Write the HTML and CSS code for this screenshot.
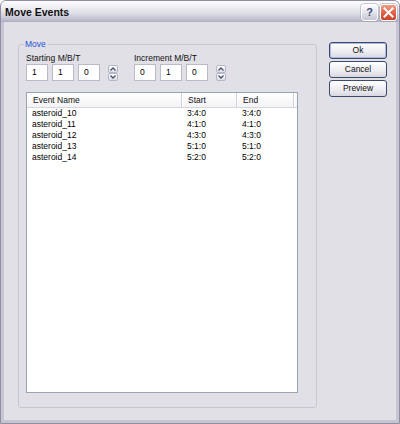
FILE: index.html
```html
<!DOCTYPE html>
<html>
<head>
<meta charset="utf-8">
<link rel="stylesheet" href="styles.css">
</head>
<body>
<div class="window">
  <div class="titlebar">
    <span class="title">Move Events</span>
    <div class="caption-buttons">
      <div class="cap-btn help">?</div>
      <div class="cap-btn close">
        <svg width="11" height="11" viewBox="0 0 11 11"><path d="M1.5 1.5 L9.5 9.5 M9.5 1.5 L1.5 9.5" stroke="#fff" stroke-width="2" stroke-linecap="square"/></svg>
      </div>
    </div>
  </div>
  <div class="client">
    <fieldset class="group">
      <legend>Move</legend>
      <div class="fields">
        <div class="field">
          <div class="label">Starting M/B/T</div>
          <div class="inputs">
            <div class="box">1</div>
            <div class="box">1</div>
            <div class="box">0</div>
            <div class="spin">
              <div class="half"><svg width="6" height="4" viewBox="0 0 6 4"><path d="M0.5 3.5 L3 1 L5.5 3.5" fill="none" stroke="#4b5068" stroke-width="1.3"/></svg></div>
              <div class="half"><svg width="6" height="4" viewBox="0 0 6 4"><path d="M0.5 0.5 L3 3 L5.5 0.5" fill="none" stroke="#4b5068" stroke-width="1.3"/></svg></div>
            </div>
          </div>
        </div>
        <div class="field">
          <div class="label">Increment M/B/T</div>
          <div class="inputs">
            <div class="box">0</div>
            <div class="box">1</div>
            <div class="box">0</div>
            <div class="spin">
              <div class="half"><svg width="6" height="4" viewBox="0 0 6 4"><path d="M0.5 3.5 L3 1 L5.5 3.5" fill="none" stroke="#4b5068" stroke-width="1.3"/></svg></div>
              <div class="half"><svg width="6" height="4" viewBox="0 0 6 4"><path d="M0.5 0.5 L3 3 L5.5 0.5" fill="none" stroke="#4b5068" stroke-width="1.3"/></svg></div>
            </div>
          </div>
        </div>
      </div>
      <div class="list">
        <div class="head">
          <div class="hcell">Event Name</div>
          <div class="hcell">Start</div>
          <div class="hcell">End</div>
        </div>
        <div class="row"><span>asteroid_10</span><span>3:4:0</span><span>3:4:0</span></div>
        <div class="row"><span>asteroid_11</span><span>4:1:0</span><span>4:1:0</span></div>
        <div class="row"><span>asteroid_12</span><span>4:3:0</span><span>4:3:0</span></div>
        <div class="row"><span>asteroid_13</span><span>5:1:0</span><span>5:1:0</span></div>
        <div class="row"><span>asteroid_14</span><span>5:2:0</span><span>5:2:0</span></div>
      </div>
    </fieldset>
    <div class="buttons">
      <div class="btn default">Ok</div>
      <div class="btn">Cancel</div>
      <div class="btn">Preview</div>
    </div>
  </div>
</div>
</body>
</html>
```
FILE: styles.css
```css
html, body {
  margin: 0;
  padding: 0;
  background: #ffffff;
}
body {
  font-family: "Liberation Sans", Arial, sans-serif;
  font-size: 8.5px;
  color: #000;
}
.window {
  width: 400px;
  height: 424px;
  box-sizing: border-box;
  border: 1px solid #8f8ea4;
  border-radius: 6px 6px 0 0;
  overflow: hidden;
  display: flex;
  flex-direction: column;
  background: #c6c5d4;
}
.titlebar {
  height: 21px;
  flex: none;
  display: flex;
  align-items: center;
  justify-content: space-between;
  padding: 0 2px 0 4px;
  background: linear-gradient(#fdfdfe 0%, #eeeef3 30%, #dcdce6 60%, #c4c3d3 85%, #aeadc0 100%);
}
.title {
  font-weight: bold;
  font-size: 10.5px;
  color: #111;
  padding-top: 1px;
}
.caption-buttons {
  display: flex;
  gap: 2px;
  padding-top: 1px;
}
.cap-btn {
  width: 15px;
  height: 15px;
  border: 1px solid #ffffff;
  border-radius: 3px;
  display: flex;
  align-items: center;
  justify-content: center;
  box-shadow: 0 0 0 0.5px #9a99ad;
}
.help {
  background: linear-gradient(#fdfdff, #e3e3ec 50%, #c5c5d4);
  color: #3e4a72;
  font-weight: bold;
  font-size: 11px;
}
.close {
  background: linear-gradient(#ef9f86, #e0634a 50%, #c9442c);
}
.client {
  flex: 1;
  display: flex;
  align-items: flex-start;
  background: #e1e0e6;
  border: 3px solid #c6c5d4;
  border-top: 0;
  padding: 17px 9px 0 14px;
}
.group {
  margin: 0;
  padding: 4px 18px 14px 7px;
  border: 1px solid #c8c7cf;
  border-radius: 3px;
  width: 299px;
  height: 369px;
  box-sizing: border-box;
  min-width: 0;
  display: flex;
  flex-direction: column;
}
.group legend {
  padding: 0 2px 0 1px;
  margin-left: -2px;
  line-height: 10px;
  color: #2452d8;
}
.fields {
  display: flex;
  gap: 16px;
}
.label {
  line-height: 10px;
  color: #111;
}
.inputs {
  margin-top: 1px;
  display: flex;
  align-items: center;
  gap: 4px;
}
.box {
  width: 22px;
  height: 17px;
  box-sizing: border-box;
  border: 1px solid #b9bcc8;
  background: #fff;
  line-height: 15px;
  padding-left: 5px;
}
.spin {
  margin-left: 4px;
  width: 10px;
  display: flex;
  flex-direction: column;
  gap: 0;
}
.half {
  height: 8px;
  box-sizing: border-box;
  border: 1px solid #b3b7c8;
  border-radius: 2px;
  background: linear-gradient(#ffffff, #dcdde8);
  display: flex;
  align-items: center;
  justify-content: center;
}
.list {
  margin-top: 11px;
  flex: 1;
  border: 1px solid #9aa3b6;
  background: #fff;
}
.head {
  display: grid;
  grid-template-columns: 155px 55px 57px;
  height: 14px;
  background: linear-gradient(#ffffff, #f3f3f6);
  border-bottom: 1px solid #d6d6de;
}
.hcell {
  line-height: 14px;
  padding-left: 6px;
  border-right: 1px solid #d0d0d8;
  box-shadow: 1px 0 0 #ffffff;
  color: #111;
}
.row {
  display: grid;
  grid-template-columns: 155px 55px 57px;
  line-height: 11px;
}
.row span {
  padding-left: 5px;
}
.row:first-of-type {
  margin-top: 1px;
}
.buttons {
  margin-left: 12px;
  margin-top: 3px;
  display: flex;
  flex-direction: column;
  gap: 2px;
}
.btn {
  width: 58px;
  height: 17px;
  box-sizing: border-box;
  border: 1px solid #3d4a6e;
  border-radius: 3px;
  background: linear-gradient(#ffffff, #ecebf0 60%, #d8d8e2);
  text-align: center;
  line-height: 15px;
  color: #111;
}
.btn.default {
  box-shadow: inset 0 0 0 1px #a9b9e4;
}
```
